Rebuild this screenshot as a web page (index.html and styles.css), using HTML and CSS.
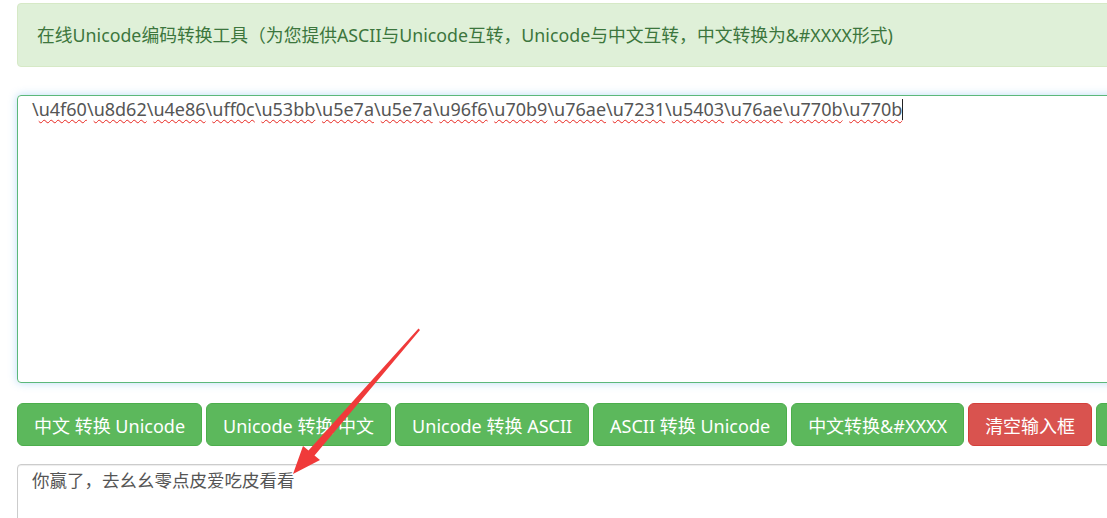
FILE: index.html
```html
<!DOCTYPE html>
<html lang="zh-CN">
<head>
<meta charset="utf-8">
<title>在线Unicode编码转换工具</title>
<link rel="stylesheet" href="styles.css">
</head>
<body>
<div class="page">
  <div class="alert">在线Unicode编码转换工具（为您提供ASCII与Unicode互转，Unicode与中文互转，中文转换为&amp;#XXXX形式)</div>
  <div class="input-box">\<span class="sp">u4f60</span>\<span class="sp">u8d62</span>\<span class="sp">u4e86</span>\<span class="sp">uff0c</span>\<span class="sp">u53bb</span>\<span class="sp">u5e7a</span>\<span class="sp">u5e7a</span>\<span class="sp">u96f6</span>\<span class="sp">u70b9</span>\<span class="sp">u76ae</span>\<span class="sp">u7231</span>\<span class="sp">u5403</span>\<span class="sp">u76ae</span>\<span class="sp">u770b</span>\<span class="sp">u770b</span><span class="caret"></span></div>
  <div class="btn-row">
    <button class="btn btn-green">中文 转换 Unicode</button>
    <button class="btn btn-green">Unicode 转换 中文</button>
    <button class="btn btn-green">Unicode 转换 ASCII</button>
    <button class="btn btn-green">ASCII 转换 Unicode</button>
    <button class="btn btn-green">中文转换&amp;#XXXX</button>
    <button class="btn btn-red">清空输入框</button>
    <button class="btn btn-green">复制结果</button>
  </div>
  <div class="output-box">你赢了，去幺幺零点皮爱吃皮看看</div>
</div>
<svg class="arrow" width="1107" height="518" viewBox="0 0 1107 518">
  <polygon fill="#f03a3a" points="418.5,328.5 420,330 314.5,455.5 320,460 293,474 303,446 308.5,450.5"/>
</svg>
</body>
</html>
```

FILE: styles.css
```css
html, body {
  margin: 0;
  padding: 0;
  background: #fff;
  overflow: hidden;
}
body {
  width: 1107px;
  height: 518px;
  position: relative;
  font-family: "Noto Sans", "Noto Sans CJK SC", sans-serif;
}
.page {
  width: 1200px;
  padding: 3px 0 0 17px;
  display: flex;
  flex-direction: column;
}
.alert {
  background: #dff0d8;
  border: 1px solid #d6e9c6;
  border-radius: 4px;
  color: #3c763d;
  font-size: 17.8px;
  line-height: 24px;
  padding: 19px 19px;
  white-space: nowrap;
}
.input-box {
  margin-top: 28px;
  height: 282px;
  border: 1px solid #5cb87a;
  border-radius: 4px;
  box-shadow: 0 0 8px rgba(102, 175, 233, 0.45);
  padding: 2px 14px;
  font-size: 18px;
  line-height: 22px;
  color: #555;
  white-space: nowrap;
}
.sp {
  text-decoration: underline wavy #e8261f;
  text-decoration-thickness: 1px;
  text-underline-offset: 3px;
}
.caret {
  display: inline-block;
  width: 1px;
  height: 21px;
  background: #222;
  vertical-align: -4px;
}
.btn-row {
  margin-top: 20px;
  display: flex;
  gap: 4px;
  white-space: nowrap;
}
.btn {
  height: 43px;
  padding: 0 16px;
  border-radius: 6px;
  border: 1px solid;
  font-family: inherit;
  font-size: 18px;
  color: #fff;
  flex: none;
}
.btn-green {
  background: #5cb85c;
  border-color: #4cae4c;
}
.btn-red {
  background: #d9534f;
  border-color: #d43f3a;
}
.output-box {
  margin-top: 18px;
  height: 120px;
  border: 1px solid #ccc;
  border-radius: 4px;
  box-shadow: inset 0 1px 1px rgba(0, 0, 0, 0.075);
  padding: 4px 14px;
  font-size: 17.5px;
  line-height: 22px;
  color: #555;
}
.arrow {
  position: absolute;
  left: 0;
  top: 0;
  pointer-events: none;
}
```
